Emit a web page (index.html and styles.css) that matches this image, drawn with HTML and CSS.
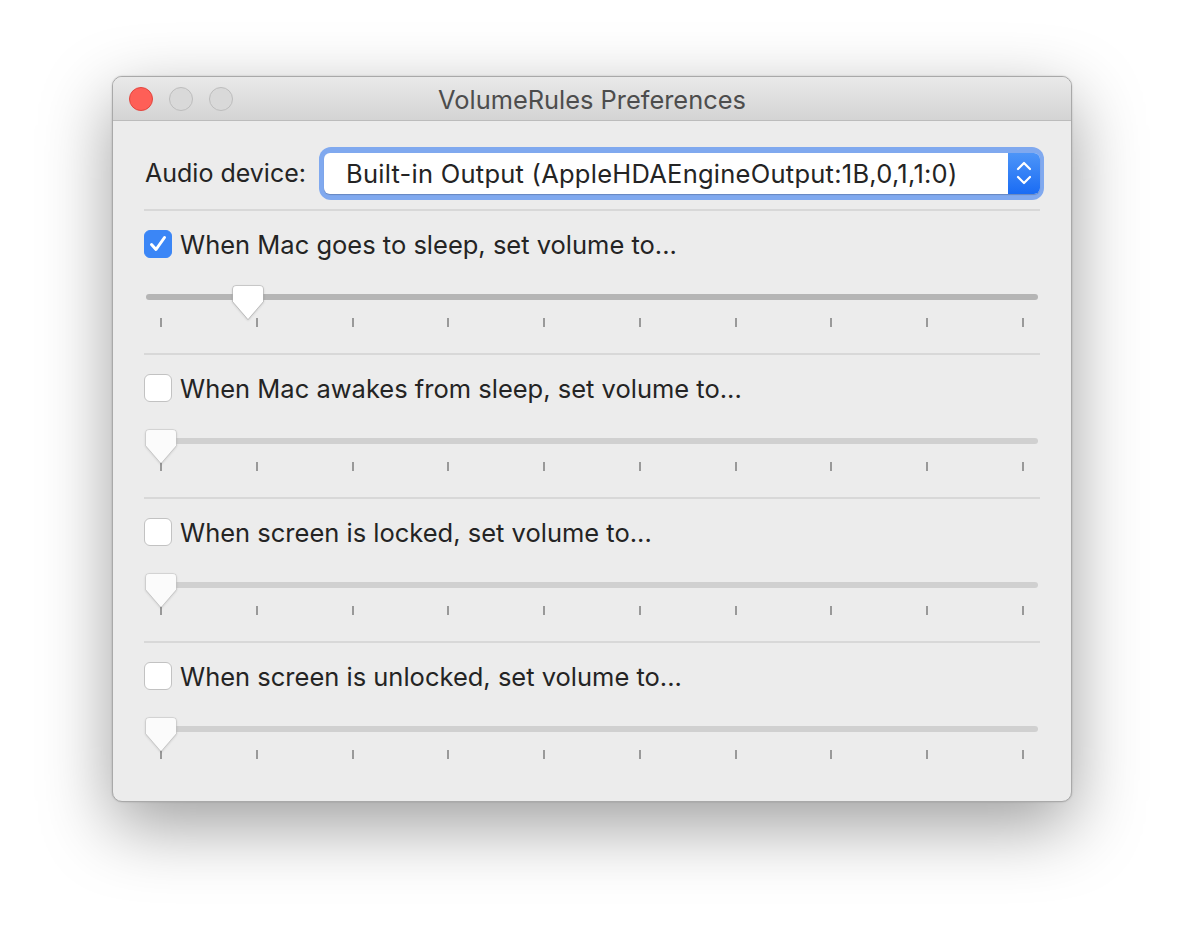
FILE: index.html
```html
<!DOCTYPE html>
<html>
<head>
<meta charset="utf-8">
<link rel="stylesheet" href="styles.css">
</head>
<body>
<div class="window">
  <div class="titlebar">
    <div class="lights">
      <span class="light red"></span>
      <span class="light"></span>
      <span class="light"></span>
    </div>
    <div class="title">VolumeRules Preferences</div>
  </div>
  <div class="content">
    <div class="device-row">
      <span class="label">Audio device:</span>
      <div class="popup">
        <div class="popup-inner">
          <span class="popup-text">Built-in Output (AppleHDAEngineOutput:1B,0,1,1:0)</span>
          <span class="stepper">
            <svg width="32" height="36" viewBox="0 0 32 36"><path d="M10 14 L16 8 L22 14 M10 22 L16 28 L22 22" fill="none" stroke="#fff" stroke-width="2.2" stroke-linecap="round" stroke-linejoin="round"/></svg>
          </span>
        </div>
      </div>
    </div>

    <div class="section">
      <div class="check-row">
        <span class="checkbox checked"><svg width="28" height="28" viewBox="0 0 28 28"><path d="M7.5 14.5 L12 19.5 L20.5 7.5" fill="none" stroke="#fff" stroke-width="3" stroke-linecap="round" stroke-linejoin="round"/></svg></span>
        <span class="check-label">When Mac goes to sleep, set volume to...</span>
      </div>
      <div class="slider active">
        <div class="track"></div>
        <div class="ticks"><i></i><i></i><i></i><i></i><i></i><i></i><i></i><i></i><i></i><i></i></div>
        <svg class="thumb" style="left: 85px" width="34" height="38" viewBox="0 0 34 38"><path d="M5 1.5 H29 a3.5 3.5 0 0 1 3.5 3.5 V17.5 L17 35.5 L1.5 17.5 V5 a3.5 3.5 0 0 1 3.5 -3.5 Z" fill="#fff" stroke="rgba(0,0,0,0.18)" stroke-width="1"/></svg>
      </div>
    </div>

    <div class="section">
      <div class="check-row">
        <span class="checkbox"></span>
        <span class="check-label">When Mac awakes from sleep, set volume to...</span>
      </div>
      <div class="slider">
        <div class="track"></div>
        <div class="ticks"><i></i><i></i><i></i><i></i><i></i><i></i><i></i><i></i><i></i><i></i></div>
        <svg class="thumb" style="left: -2px" width="34" height="38" viewBox="0 0 34 38"><path d="M5 1.5 H29 a3.5 3.5 0 0 1 3.5 3.5 V17.5 L17 35.5 L1.5 17.5 V5 a3.5 3.5 0 0 1 3.5 -3.5 Z" fill="#fbfbfb" stroke="rgba(0,0,0,0.12)" stroke-width="1"/></svg>
      </div>
    </div>

    <div class="section">
      <div class="check-row">
        <span class="checkbox"></span>
        <span class="check-label">When screen is locked, set volume to...</span>
      </div>
      <div class="slider">
        <div class="track"></div>
        <div class="ticks"><i></i><i></i><i></i><i></i><i></i><i></i><i></i><i></i><i></i><i></i></div>
        <svg class="thumb" style="left: -2px" width="34" height="38" viewBox="0 0 34 38"><path d="M5 1.5 H29 a3.5 3.5 0 0 1 3.5 3.5 V17.5 L17 35.5 L1.5 17.5 V5 a3.5 3.5 0 0 1 3.5 -3.5 Z" fill="#fbfbfb" stroke="rgba(0,0,0,0.12)" stroke-width="1"/></svg>
      </div>
    </div>

    <div class="section">
      <div class="check-row">
        <span class="checkbox"></span>
        <span class="check-label">When screen is unlocked, set volume to...</span>
      </div>
      <div class="slider">
        <div class="track"></div>
        <div class="ticks"><i></i><i></i><i></i><i></i><i></i><i></i><i></i><i></i><i></i><i></i></div>
        <svg class="thumb" style="left: -2px" width="34" height="38" viewBox="0 0 34 38"><path d="M5 1.5 H29 a3.5 3.5 0 0 1 3.5 3.5 V17.5 L17 35.5 L1.5 17.5 V5 a3.5 3.5 0 0 1 3.5 -3.5 Z" fill="#fbfbfb" stroke="rgba(0,0,0,0.12)" stroke-width="1"/></svg>
      </div>
    </div>
  </div>
</div>
</body>
</html>
```

FILE: styles.css
```css
html, body {
  margin: 0;
  padding: 0;
  background: #ffffff;
}
body {
  padding-top: 76px;
  min-height: 950px;
  box-sizing: border-box;
  font-family: Inter, "Noto Sans", "Liberation Sans", sans-serif;
}
.window {
  width: 960px;
  height: 726px;
  margin: 0 auto;
  box-sizing: border-box;
  background: #ececec;
  border-radius: 10px;
  border: 1px solid #a9a9a9;
  box-shadow: 0 24px 70px rgba(0, 0, 0, 0.38), 0 0 2px rgba(0, 0, 0, 0.2);
  overflow: hidden;
  display: flex;
  flex-direction: column;
}
.titlebar {
  height: 43px;
  flex: none;
  background: linear-gradient(#e9e9e9, #d4d4d4);
  border-bottom: 1px solid #bcbcbc;
  display: flex;
  align-items: center;
  position: relative;
}
.lights {
  display: flex;
  gap: 16px;
  padding-left: 16px;
}
.light {
  width: 22px;
  height: 22px;
  border-radius: 50%;
  background: #d9d9d9;
  border: 1px solid #bdbdbd;
}
.light.red {
  background: #fe5f57;
  border-color: #e2463f;
}
.title {
  position: absolute;
  left: 0;
  right: 0;
  top: 0;
  bottom: 0;
  display: flex;
  align-items: center;
  justify-content: center;
  font-size: 25.4px;
  color: #4d4d4d;
  padding-top: 1px;
}
.content {
  padding: 0 31px 0 31px;
  color: #242424;
  font-size: 25.5px;
}
.device-row {
  display: flex;
  align-items: center;
  height: 90px;
  border-bottom: 2px solid #d8d8d8;
  box-sizing: border-box;
  padding-top: 16px;
}
.label {
  width: 174px;
  flex: none;
  padding-left: 1px;
  font-size: 25px;
}
.popup {
  flex: 1;
  margin-right: -4px;
  padding: 6px 4px 6px 5px;
  border-radius: 12px;
  background: #80a9ef;
}
.popup-inner {
  display: flex;
  align-items: center;
  height: 41px;
  background: #fff;
  border-radius: 6px;
  overflow: hidden;
  box-shadow: 0 1px 1px rgba(0, 0, 0, 0.2);
}
.popup-text {
  flex: 1;
  padding-left: 22px;
  font-size: 25.5px;
  letter-spacing: 0.25px;
}
.stepper {
  width: 32px;
  height: 100%;
  display: flex;
  align-items: center;
  justify-content: center;
  background: linear-gradient(#4d95f8, #1a6cf4);
}
.section {
  height: 144px;
  box-sizing: border-box;
  border-bottom: 2px solid #d8d8d8;
  padding-top: 18px;
}
.section:last-child {
  border-bottom: none;
}
.check-row {
  display: flex;
  align-items: center;
  height: 30px;
}
.checkbox {
  width: 28px;
  height: 28px;
  box-sizing: border-box;
  border-radius: 6px;
  background: #fff;
  border: 1px solid #c2c2c2;
  margin-right: 8px;
  display: flex;
}
.checkbox.checked {
  background: #3b86f6;
  border-color: #3b86f6;
}
.checkbox.checked svg {
  margin: -1px;
}
.slider {
  position: relative;
  margin-top: 24px;
  margin-left: 2px;
  width: 892px;
  height: 48px;
}
.track {
  position: absolute;
  left: 0;
  right: 0;
  top: 11px;
  height: 6px;
  border-radius: 3px;
  background: #d0d0d0;
}
.slider.active .track {
  background: #b5b5b5;
}
.ticks {
  position: absolute;
  left: 14px;
  right: 14px;
  top: 35px;
  display: flex;
  justify-content: space-between;
}
.ticks i {
  width: 2px;
  height: 9px;
  background: #999;
}
.thumb {
  position: absolute;
  top: 1px;
  filter: drop-shadow(0 1px 1px rgba(0, 0, 0, 0.15));
}
```
